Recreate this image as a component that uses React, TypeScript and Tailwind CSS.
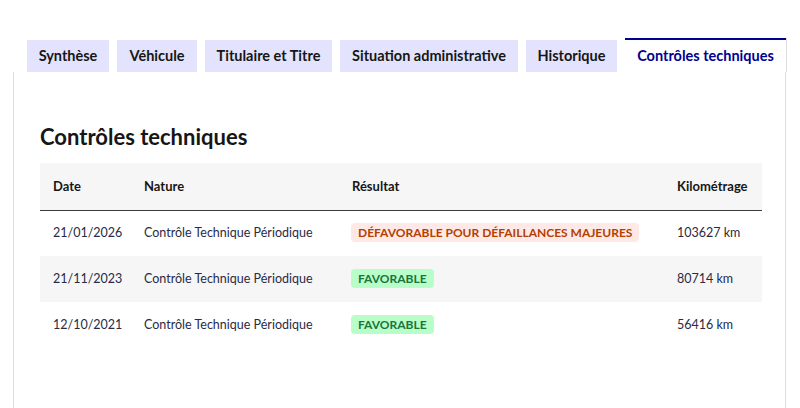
const tabs = [
  { label: 'Synthèse', w: 'w-[82px]' },
  { label: 'Véhicule', w: 'w-[80px]' },
  { label: 'Titulaire et Titre', w: 'w-[127px]' },
  { label: 'Situation administrative', w: 'w-[178px]' },
  { label: 'Historique', w: 'w-[91px]' },
  { label: 'Contrôles techniques', w: 'w-[161px]' },
]

type Row = {
  date: string
  nature: string
  result: string
  ok: boolean
  km: string
}

const rows: Row[] = [
  { date: '21/01/2026', nature: 'Contrôle Technique Périodique', result: 'Défavorable pour défaillances majeures', ok: false, km: '103627 km' },
  { date: '21/11/2023', nature: 'Contrôle Technique Périodique', result: 'Favorable', ok: true, km: '80714 km' },
  { date: '12/10/2021', nature: 'Contrôle Technique Périodique', result: 'Favorable', ok: true, km: '56416 km' },
]

function Badge({ ok, children }: { ok: boolean; children: string }) {
  return (
    <span
      className={
        'inline-block whitespace-nowrap rounded px-[7px] py-[1px] text-[12px] font-bold uppercase leading-[17px] ' +
        (ok ? 'bg-[#b8fec9] text-[#18753c]' : 'bg-[#ffe9e6] text-[#b34000]')
      }
    >
      {children}
    </span>
  )
}

export default function App() {
  return (
    <div className="h-[408px] w-[800px] overflow-hidden bg-white pt-[38px] pl-[13px] font-['Lato',sans-serif] text-[#161616]">
      <div className="w-[773px]">
        <ul className="flex gap-2 pl-[14px]">
          {tabs.map((t, i) => {
            const active = i === tabs.length - 1
            return (
              <li
                key={t.label}
                className={
                  'flex items-center justify-center whitespace-nowrap text-[14.5px] font-bold ' +
                  t.w +
                  ' ' +
                  (active
                    ? 'h-[34px] border-t-2 border-[#000091] bg-white text-[#000091] shadow-[1px_0_0_#dddddd]'
                    : 'mt-[2px] h-[32px] bg-[#e3e3fd] text-[#161616]')
                }
              >
                {t.label}
              </li>
            )
          })}
        </ul>

        <div className="h-[340px] border-x border-[#dddddd] px-[26px] pt-[49px]">
          <h2 className="text-[22px] font-bold leading-[32px] text-[#161616]">Contrôles techniques</h2>

          <table className="mt-[10px] w-[722px] table-fixed border-collapse text-[12.5px]">
            <colgroup>
              <col className="w-[91px]" />
              <col className="w-[208px]" />
              <col className="w-[325px]" />
              <col className="w-[98px]" />
            </colgroup>
            <thead>
              <tr className="h-[47px] border-b border-[#3a3a3a] bg-[#f6f6f6] text-left text-[13px]">
                <th className="px-[13px] font-bold">Date</th>
                <th className="px-[13px] font-bold">Nature</th>
                <th className="px-[13px] font-bold">Résultat</th>
                <th className="px-[13px] font-bold">Kilométrage</th>
              </tr>
            </thead>
            <tbody className="text-[#2a2a45]">
              {rows.map((r, i) => (
                <tr key={r.date} className={'h-[46px] ' + (i % 2 === 1 ? 'bg-[#f6f6f6]' : '')}>
                  <td className="px-[13px]">{r.date}</td>
                  <td className="px-[13px]">{r.nature}</td>
                  <td className="px-[12px]">
                    <Badge ok={r.ok}>{r.result}</Badge>
                  </td>
                  <td className="px-[13px]">{r.km}</td>
                </tr>
              ))}
            </tbody>
          </table>
        </div>
      </div>
    </div>
  )
}
